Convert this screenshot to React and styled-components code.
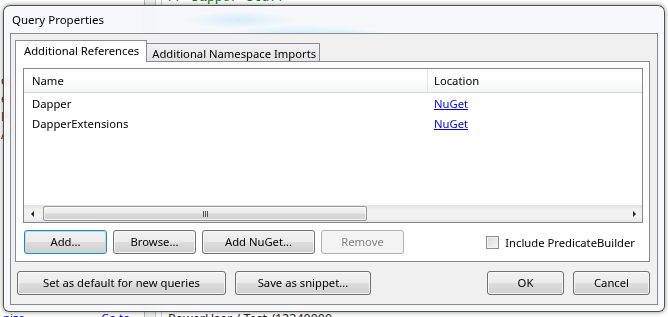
import styled, { createGlobalStyle } from "styled-components";

const GlobalStyle = createGlobalStyle`
  html, body { margin: 0; padding: 0; }
  body {
    background: #ffffff;
    font-family: "Noto Sans", "Open Sans", sans-serif;
    font-size: 11.25px;
    color: #000;
  }
`;

const UI_FONT = `"Noto Sans", "Open Sans", sans-serif`;

/* ---------- the application behind the dialog ---------- */

const Desktop = styled.div`
  position: relative;
  width: 668px;
  height: 317px;
  overflow: hidden;
  background: #ffffff;
`;

const Backdrop = styled.div`
  display: flex;
  height: 100%;
`;

const SidePane = styled.div`
  width: 145px;
  border-right: 1px solid #b4b4b4;
  display: flex;
  flex-direction: column;
  justify-content: space-between;
  padding: 74px 0 0 0;
  box-sizing: border-box;
  font-family: ${UI_FONT};
`;

const SideList = styled.div`
  display: flex;
  flex-direction: column;
  gap: 4px;
  padding-left: 1px;
  color: #333;
  font-size: 12px;
  line-height: 14px;
`;

const SideLinks = styled.div`
  display: flex;
  justify-content: space-between;
  padding: 0 5px 0 3px;
  margin-bottom: -8px;
  font-size: 11.25px;
  line-height: 14px;
`;

const BackLink = styled.span`
  color: #0000ee;
  text-decoration: underline;
`;

const Splitter = styled.div`
  width: 10px;
  background: #eef0f2;
  border-right: 1px solid #c4c4c4;
`;

const Gutter = styled.div`
  width: 5px;
  border-right: 1px solid #d0d0d0;
`;

const Editor = styled.div`
  flex: 1;
  display: flex;
  flex-direction: column;
  justify-content: space-between;
  padding-left: 6px;
  font-family: "Liberation Mono", monospace;
  font-size: 13px;
  line-height: 15px;
`;

const CodeLine = styled.div`
  margin-top: -10px;
  color: ${(p) => p.$color || "#000"};
`;

const StatusLine = styled.div`
  margin-bottom: -9px;
  font-family: ${UI_FONT};
  font-size: 12.5px;
  color: #222;
`;

/* ---------- the dialog window ---------- */

const Dialog = styled.div`
  position: absolute;
  left: 3px;
  top: 5px;
  width: 662px;
  height: 307px;
  box-sizing: border-box;
  display: flex;
  flex-direction: column;
  padding: 0 6px 6px 6px;
  border: 1px solid rgba(50, 50, 50, 0.85);
  border-radius: 7px 7px 6px 6px;
  background:
    radial-gradient(ellipse 55px 8px at 235px 14px, rgba(120, 200, 255, 0.26), transparent),
    radial-gradient(ellipse 70px 8px at 295px 27px, rgba(120, 215, 255, 0.3), transparent),
    radial-gradient(ellipse 40px 6px at 345px 29px, rgba(140, 230, 255, 0.35), transparent),
    rgba(244, 247, 250, 0.86);
  backdrop-filter: blur(2px);
  box-shadow: 0 0 5px rgba(0, 0, 0, 0.45), inset 0 0 0 1px rgba(255, 255, 255, 0.75);
`;

const TitleBar = styled.div`
  height: 27px;
  display: flex;
  align-items: center;
  padding-left: 2px;
  font-family: ${UI_FONT};
  font-size: 11.5px;
  color: #000;
`;

const Client = styled.div`
  flex: 1;
  display: flex;
  flex-direction: column;
  border: 1px solid #8a8a8a;
  background: #f0f0f0;
  padding: 7px 7px 8px 4px;
  font-family: ${UI_FONT};
`;

const TabStrip = styled.div`
  display: flex;
  align-items: flex-end;
  height: 21px;
  margin-bottom: -1px;
  position: relative;
  z-index: 1;
`;

const Tab = styled.div`
  box-sizing: border-box;
  display: flex;
  align-items: center;
  border: 1px solid #898c95;
  border-bottom: none;
  white-space: nowrap;
  ${(p) =>
    p.$active
      ? `
    height: 22px;
    padding: 0 7px 2px 8px;
    background: #ffffff;
  `
      : `
    height: 18px;
    margin-bottom: 1px;
    padding: 1px 3px 0 5px;
    border-left: none;
    background: linear-gradient(#f2f2f2, #e4e4e4);
  `}
`;

const TabPanel = styled.div`
  height: 201px;
  box-sizing: border-box;
  border: 1px solid #898c95;
  background: #ffffff;
  padding: 6px 6px 7px 7px;
  display: flex;
  flex-direction: column;
  gap: 7px;
`;

const ListView = styled.div`
  height: 155px;
  box-sizing: border-box;
  border: 1px solid #828790;
  background: #ffffff;
  display: flex;
  flex-direction: column;
`;

const HeaderRow = styled.div`
  display: grid;
  grid-template-columns: 404px 1fr;
  height: 24px;
  box-sizing: border-box;
  border-bottom: 1px solid #d5d5d5;
  background: linear-gradient(#ffffff, #ffffff 40%, #f4f5f6);
`;

const HeaderCell = styled.div`
  display: flex;
  align-items: center;
  padding-left: ${(p) => (p.$first ? "8px" : "6px")};
  border-right: ${(p) => (p.$first ? "1px solid #e3e6ea" : "none")};
`;

const Rows = styled.div`
  flex: 1;
`;

const Row = styled.div`
  display: grid;
  grid-template-columns: 404px 1fr;
  height: 20px;
  align-items: center;
`;

const Cell = styled.div`
  padding-left: ${(p) => (p.$first ? "8px" : "6px")};
`;

const Link = styled.span`
  color: #0000ff;
  text-decoration: underline;
`;

const HScroll = styled.div`
  display: flex;
  height: 17px;
  background: linear-gradient(#e2e2e2, #f0f0f0 25%, #f2f2f2 75%, #e6e6e6);
`;

const ScrollArrow = styled.div`
  width: 17px;
  display: flex;
  align-items: center;
  justify-content: center;
  margin-left: ${(p) => (p.$right ? "auto" : "0")};
  &::before {
    content: "";
    border-top: 3px solid transparent;
    border-bottom: 3px solid transparent;
    ${(p) =>
      p.$right
        ? "border-left: 3px solid #222; margin-left: 1px;"
        : "border-right: 3px solid #222; margin-right: 1px;"}
  }
`;

const ScrollThumb = styled.div`
  width: 324px;
  margin: 1px 0 1px 2px;
  box-sizing: border-box;
  border: 1px solid #979797;
  border-radius: 2px;
  background: linear-gradient(#f4f4f4, #ececec 45%, #dadada 55%, #d2d2d2);
  box-shadow: inset 0 0 0 1px rgba(255, 255, 255, 0.7);
  display: flex;
  align-items: center;
  justify-content: center;
`;

const Grip = styled.div`
  width: 5px;
  height: 6px;
  background: repeating-linear-gradient(90deg, #555 0 1px, transparent 1px 2px);
`;

const ButtonRow = styled.div`
  display: flex;
  align-items: center;
  gap: 6px;
  padding: 0 8px 0 1px;
`;

const BottomRow = styled.div`
  display: flex;
  align-items: center;
  gap: 9px;
  margin-top: 9px;
  padding-left: 2px;
`;

const Spacer = styled.div`
  flex: 1;
`;

const Button = styled.button`
  width: ${(p) => p.$w}px;
  height: ${(p) => p.$h || 24}px;
  box-sizing: border-box;
  padding: 0 0 1px 0;
  font-family: ${UI_FONT};
  font-size: 11.25px;
  color: #000;
  border: 1px solid ${(p) => (p.$focused ? "#3c7fb1" : "#707070")};
  border-radius: 3px;
  background: linear-gradient(#f2f2f2, #ebebeb 48%, #dddddd 52%, #cfcfcf);
  box-shadow: inset 0 0 0 1px ${(p) => (p.$focused ? "#a4e3f8" : "rgba(252, 252, 252, 0.85)")};
  white-space: nowrap;
  &:disabled {
    color: #838383;
    border-color: #adb2b5;
    background: #f4f4f4;
    box-shadow: none;
  }
`;

const CheckLabel = styled.label`
  margin-left: auto;
  display: flex;
  align-items: center;
  gap: 6px;
  white-space: nowrap;
`;

const CheckBox = styled.span`
  width: 13px;
  height: 13px;
  box-sizing: border-box;
  border: 1px solid #8f8f8f;
  background: linear-gradient(135deg, #d9d9d9, #f7f7f7);
  box-shadow: inset 0 0 0 1px #f4f4f4;
`;

const references = [
  { name: "Dapper", location: "NuGet" },
  { name: "DapperExtensions", location: "NuGet" },
];

export default function App() {
  return (
    <Desktop>
      <GlobalStyle />
      <Backdrop>
        <SidePane>
          <SideList>
            <span>o</span>
            <span>e</span>
            <span>R</span>
            <span>A</span>
          </SideList>
          <SideLinks>
            <BackLink>nize...</BackLink>
            <BackLink>Go to...</BackLink>
          </SideLinks>
        </SidePane>
        <Splitter />
        <Gutter />
        <Editor>
          <CodeLine $color="#008000">// Dapper Stuff</CodeLine>
          <StatusLine>PowerUser / Test /12340000</StatusLine>
        </Editor>
      </Backdrop>

      <Dialog>
        <TitleBar>Query Properties</TitleBar>
        <Client>
          <TabStrip>
            <Tab $active>Additional References</Tab>
            <Tab>Additional Namespace Imports</Tab>
          </TabStrip>
          <TabPanel>
            <ListView>
              <HeaderRow>
                <HeaderCell $first>Name</HeaderCell>
                <HeaderCell>Location</HeaderCell>
              </HeaderRow>
              <Rows>
                {references.map((r) => (
                  <Row key={r.name}>
                    <Cell $first>{r.name}</Cell>
                    <Cell>
                      <Link>{r.location}</Link>
                    </Cell>
                  </Row>
                ))}
              </Rows>
              <HScroll>
                <ScrollArrow />
                <ScrollThumb>
                  <Grip />
                </ScrollThumb>
                <ScrollArrow $right />
              </HScroll>
            </ListView>
            <ButtonRow>
              <Button $w={83} $focused>Add...</Button>
              <Button $w={83}>Browse...</Button>
              <Button $w={113}>Add NuGet...</Button>
              <Button $w={83} disabled>Remove</Button>
              <CheckLabel>
                <CheckBox />
                Include PredicateBuilder
              </CheckLabel>
            </ButtonRow>
          </TabPanel>
          <BottomRow>
            <Button $w={209}>Set as default for new queries</Button>
            <Button $w={136}>Save as snippet...</Button>
            <Spacer />
            <Button $w={77}>OK</Button>
            <Button $w={77}>Cancel</Button>
          </BottomRow>
        </Client>
      </Dialog>
    </Desktop>
  );
}
